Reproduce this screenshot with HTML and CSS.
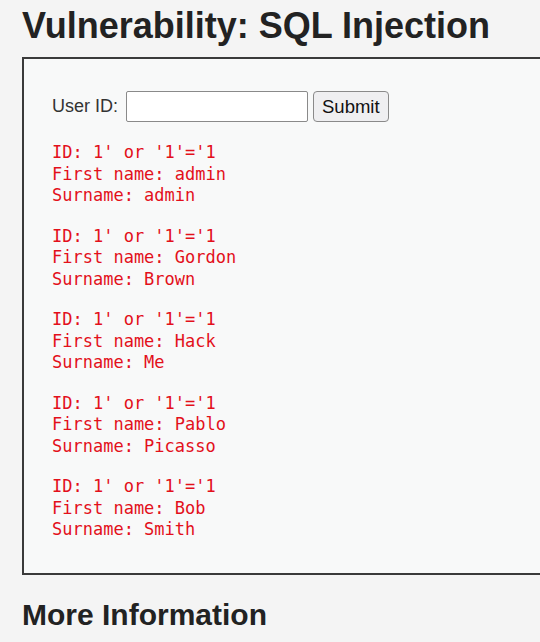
FILE: index.html
```html
<!DOCTYPE html>
<html lang="en">
<head>
    <meta charset="UTF-8">
    <title>Vulnerability: SQL Injection</title>
    <link rel="stylesheet" href="styles.css">
</head>
<body>
    <div class="body_padded">
        <h1>Vulnerability: SQL Injection</h1>

        <div class="vulnerable_code_area">
            <form action="#" method="GET">
                <p>
                    User ID:
                    <input type="text" size="15" name="id">
                    <input type="submit" name="Submit" value="Submit">
                </p>
            </form>
            <pre>ID: 1' or '1'='1<br>First name: admin<br>Surname: admin</pre>
            <pre>ID: 1' or '1'='1<br>First name: Gordon<br>Surname: Brown</pre>
            <pre>ID: 1' or '1'='1<br>First name: Hack<br>Surname: Me</pre>
            <pre>ID: 1' or '1'='1<br>First name: Pablo<br>Surname: Picasso</pre>
            <pre>ID: 1' or '1'='1<br>First name: Bob<br>Surname: Smith</pre>
        </div>

        <h2>More Information</h2>
    </div>
</body>
</html>
```

FILE: styles.css
```css
/* Algemeen */
html, body {
    margin: 0;
    padding: 0;
    overflow: hidden;
}

body {
    font-family: "Liberation Sans", Arial, sans-serif;
    background-color: #f4f4f4;
    color: #222;
}

.body_padded {
    padding: 0 0 0 22px;
}

h1 {
    font-size: 36px;
    font-weight: bold;
    line-height: 44px;
    margin: 4px 0 9px 0;
    color: #222;
}

h2 {
    font-size: 30px;
    font-weight: bold;
    line-height: 36px;
    margin: 22px 0 0 0;
    color: #222;
}

/* Kader met formulier en resultaten (loopt rechts door buiten beeld) */
.vulnerable_code_area {
    border: 2px solid #3a3a3a;
    border-right: none;
    background-color: #f8f9f9;
    padding: 16px 28px 13px 28px;
}

.vulnerable_code_area p {
    margin: 16px 0 20px 0;
    font-size: 18px;
    color: #333;
    display: flex;
    align-items: center;
    gap: 8px;
}

input[type="text"] {
    width: 176px;
    height: 27px;
    border: 1px solid #8a8a8a;
    border-radius: 2px;
    background: #fff;
    padding: 1px 2px;
    margin: 0;
}

input[type="submit"] {
    font-family: "Liberation Sans", Arial, sans-serif;
    font-size: 18.5px;
    height: 31px;
    padding: 0 8px;
    border: 1px solid #8a8a8a;
    border-radius: 4px;
    background: #efeff1;
    color: #111;
    margin-left: -3px;
}

pre {
    font-family: "DejaVu Sans Mono", monospace;
    font-size: 17px;
    line-height: 21.5px;
    color: #e3101b;
    margin: 0 0 19px 0;
}
```
